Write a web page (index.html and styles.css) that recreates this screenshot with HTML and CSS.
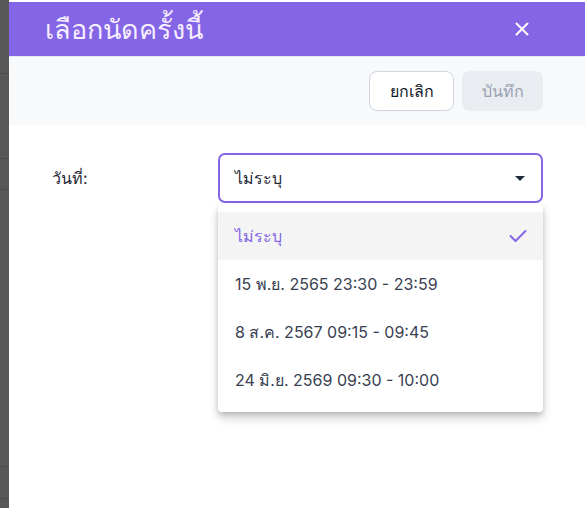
FILE: index.html
```html
<!DOCTYPE html>
<html lang="th">
<head>
<meta charset="utf-8">
<link rel="stylesheet" href="styles.css">
</head>
<body>
<div class="strip"></div>
<div class="dialog">
  <header class="dlg-header">
    <h1 class="dlg-title">เลือกนัดครั้งนี้</h1>
    <button class="close-btn" aria-label="close">
      <svg width="16" height="16" viewBox="0 0 16 16"><path d="M2.5 2.5 L13.5 13.5 M13.5 2.5 L2.5 13.5" stroke="#ffffff" stroke-width="2" stroke-linecap="round"/></svg>
    </button>
  </header>
  <div class="toolbar">
    <button class="btn btn-outline">ยกเลิก</button>
    <button class="btn btn-disabled">บันทึก</button>
  </div>
  <div class="content">
    <div class="field">
      <label class="field-label">วันที่:</label>
      <div class="select-wrap">
        <div class="select">
          <span class="select-value">ไม่ระบุ</span>
          <svg class="caret" width="10" height="5" viewBox="0 0 10 5"><path d="M0 0 H10 L5 5 Z" fill="#1f2937"/></svg>
        </div>
        <ul class="menu">
          <li class="opt selected"><span>ไม่ระบุ</span>
            <svg width="18" height="14" viewBox="0 0 18 14"><path d="M1.5 7 L6.5 12 L16.5 2" fill="none" stroke="#8465e6" stroke-width="2" stroke-linecap="round" stroke-linejoin="round"/></svg>
          </li>
          <li class="opt">15 พ.ย. 2565 23:30 - 23:59</li>
          <li class="opt">8 ส.ค. 2567 09:15 - 09:45</li>
          <li class="opt">24 มิ.ย. 2569 09:30 - 10:00</li>
        </ul>
      </div>
    </div>
  </div>
</div>
</body>
</html>
```

FILE: styles.css
```css
html, body {
  margin: 0;
  padding: 0;
}
body {
  width: 585px;
  height: 508px;
  display: flex;
  overflow: hidden;
  font-family: "Inter", "Noto Sans", sans-serif;
  color: #374151;
  background: #ffffff;
}
.strip {
  width: 9px;
  flex: none;
  background:
    linear-gradient(#4c4c4c, #4c4c4c) 0 73px / 100% 1px no-repeat,
    linear-gradient(#4c4c4c, #4c4c4c) 0 158px / 100% 1px no-repeat,
    linear-gradient(#4c4c4c, #4c4c4c) 0 189px / 100% 1px no-repeat,
    linear-gradient(#4c4c4c, #4c4c4c) 0 466px / 100% 1px no-repeat,
    linear-gradient(#4c4c4c, #4c4c4c) 0 498px / 100% 1px no-repeat,
    #585858;
}
.dialog {
  flex: 1;
  display: flex;
  flex-direction: column;
  padding-top: 2px;
  background: #ffffff;
}
.dlg-header {
  height: 54px;
  background: #8465e6;
  display: flex;
  align-items: center;
  justify-content: space-between;
  padding: 0 56px 0 36px;
  border-bottom: 1px solid #e7e9f0;
}
.dlg-title {
  margin: 0;
  font-size: 27px;
  font-weight: 400;
  color: #f6efff;
}
.close-btn {
  border: 0;
  background: none;
  padding: 0;
  width: 16px;
  height: 16px;
  display: flex;
}
.toolbar {
  height: 68px;
  background: #f8f9fb;
  display: flex;
  justify-content: flex-end;
  align-items: flex-start;
  gap: 8px;
  padding: 14px 43px 0 0;
  box-sizing: border-box;
}
.btn {
  height: 40px;
  border-radius: 8px;
  font-family: inherit;
  font-size: 16px;
  padding: 0;
}
.btn-outline {
  width: 85px;
  background: #ffffff;
  border: 1px solid #cfd6e0;
  color: #111827;
}
.btn-disabled {
  width: 81px;
  background: #e9ecf1;
  border: 0;
  color: #9aa3b2;
}
.content {
  padding: 28px 43px 0 43px;
}
.field {
  display: flex;
  align-items: flex-start;
}
.field-label {
  width: 166px;
  height: 50px;
  display: flex;
  align-items: center;
  font-size: 16px;
  color: #1f2937;
}
.select-wrap {
  position: relative;
  width: 325px;
}
.select {
  height: 50px;
  box-sizing: border-box;
  border: 2px solid #8465e6;
  border-radius: 7px;
  display: flex;
  align-items: center;
  justify-content: space-between;
  padding: 0 16px 0 15px;
  font-size: 16px;
  color: #1f2937;
}
.caret {
  display: block;
}
.menu {
  position: absolute;
  left: 0;
  right: 0;
  top: 51px;
  margin: 0;
  padding: 8px 0;
  list-style: none;
  background: #ffffff;
  border-radius: 4px;
  box-shadow: 0 6px 10px rgba(0,0,0,0.2), 0 2px 4px rgba(0,0,0,0.12);
}
.opt {
  height: 48px;
  display: flex;
  align-items: center;
  justify-content: space-between;
  padding: 0 16px 0 17px;
  font-size: 16px;
  color: #374151;
}
.opt.selected {
  background: #f4f4f5;
  color: #8465e6;
}
```
